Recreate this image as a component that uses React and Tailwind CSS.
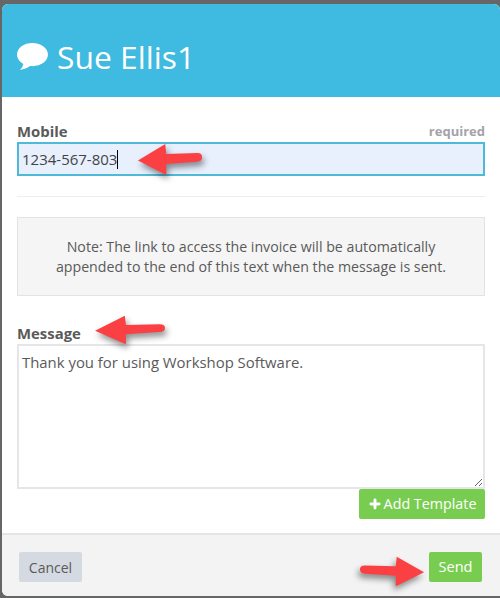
import { Plus } from "lucide-react";

const Arrow = ({ className, flip }) => (
  <svg
    viewBox="0 0 70 36"
    preserveAspectRatio="none"
    className={`absolute drop-shadow-[2px_4px_3px_rgba(0,0,0,0.45)] ${className}`}
    style={flip ? { transform: "scaleX(-1)" } : undefined}
  >
    <path
      d="M1 19 L30 1 L31 12 L64 11 Q69 11 69 15.500 Q69 20 64 20.500 L31 23 L31 35 Z"
      fill="#fb4044"
    />
  </svg>
);

const ChatIcon = () => (
  <svg viewBox="0 0 34 30" className="w-[33px] h-[29px] mr-[8px] fill-white shrink-0">
    <path d="M17 1C8 1 1 6 1 13c0 4 2.600 7.500 6.500 9.800C7 25 6 27.200 4 29c4-.5 8-2.500 10.500-4.100.800.100 1.700.100 2.500.100 9 0 16-5.400 16-12S26 1 17 1z" />
  </svg>
);

export default function App() {
  return (
    <div className="relative w-[500px] h-[598px] overflow-hidden bg-[#666666] pt-[4px] pl-[2px] pb-[2px] font-['Open_Sans',sans-serif] text-[#5a5a5a]">
      <div className="flex flex-col h-full rounded-tl-md rounded-tr-md rounded-bl-md overflow-hidden bg-white">
        <div className="h-[93px] shrink-0 bg-[#3fbae0] flex items-center pl-[14px] pt-[12px] text-white text-[31.8px]">
          <ChatIcon />
          <span>Sue Ellis1</span>
        </div>

        <div className="flex-1 px-[15px] pt-[25px]">
          <div className="flex items-end justify-between h-[19px] mb-[1px]">
            <label className="text-[14.9px] font-bold leading-[19px]">Mobile</label>
            <span className="text-[13px] font-bold leading-[19px] text-[#a3a3aa]">required</span>
          </div>
          <div className="h-[34px] border-2 border-[#4fb9d8] bg-[#e8f0fe] pl-[3px] pt-[1px] flex items-center text-[15px] text-[#444444]">
            1234-567-803
            <span className="w-px h-[19px] bg-black" />
          </div>

          <div className="h-px bg-[#eeeeee] mt-[20px] mb-[20px]" />

          <div className="h-[79px] border border-[#e3e3e3] bg-[#f5f5f5] flex items-center justify-center text-center text-[14.2px] leading-[20px]">
            <p>
              Note: The link to access the invoice will be automatically
              <br />
              appended to the end of this text when the message is sent.
            </p>
          </div>

          <label className="block mt-[28px] mb-[1px] text-[14.9px] font-bold leading-[19px]">Message</label>
          <textarea
            readOnly
            defaultValue="Thank you for using Workshop Software."
            className="block w-full h-[145px] border-2 border-[#e5e5ea] bg-white px-[3px] py-[6px] text-[14.9px] leading-[20px] text-[#5a5a5a] outline-none"
          />
          <div className="flex justify-end">
            <button className="h-[30px] w-[126px] rounded-[2px] bg-[#78cd51] text-white text-[14.3px] flex items-center justify-center">
              <Plus size={14} strokeWidth={5} className="mr-[2px]" />
              Add Template
            </button>
          </div>
        </div>

        <div className="h-[63px] shrink-0 border-t-2 border-[#e5e5e5] bg-[#f3f3f3] flex items-center justify-between pl-[17px] pr-[18px] pt-[3px]">
          <button className="h-[30px] w-[63px] rounded-[2px] bg-[#d5d9e2] text-[14px] text-[#5a5a5a]">Cancel</button>
          <button className="h-[30px] w-[53px] rounded-[2px] bg-[#78cd51] text-[14.6px] text-white">Send</button>
        </div>
      </div>

      <Arrow className="left-[137px] top-[143px] w-[66px] h-[33px]" />
      <Arrow className="left-[94px] top-[315px] w-[72px] h-[30px]" />
      <Arrow className="left-[359px] top-[556px] w-[66px] h-[31px]" flip />
    </div>
  );
}
